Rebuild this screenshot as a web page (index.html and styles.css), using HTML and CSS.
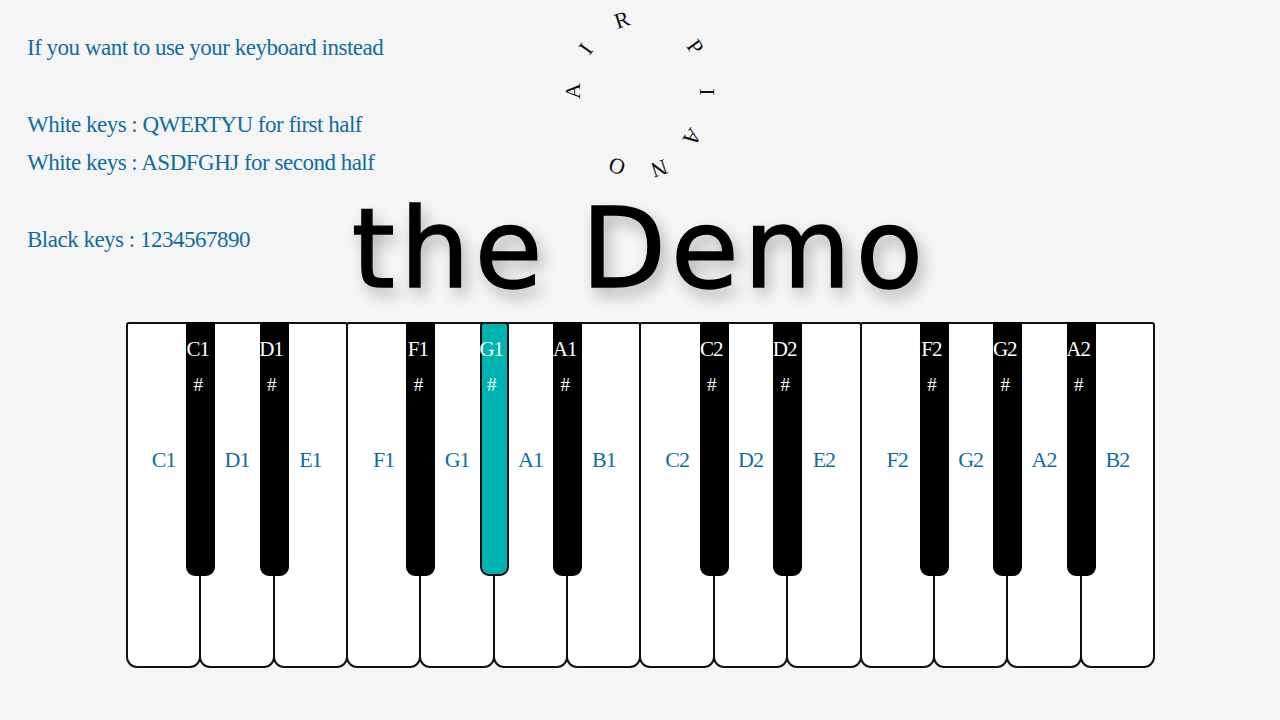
FILE: index.html
```html
<!DOCTYPE html>
<html lang="en">
<head>
    <meta charset="UTF-8">
    <meta name="viewport" content="width=device-width, initial-scale=1.0">
    <title>Air Piano</title>
    <link rel="stylesheet" href="styles.css">
</head>
<body>
    <div class="top">
        <div class="notes">
            <p>If you want to use your keyboard instead</p>
            <br>
            <p>White keys : QWERTYU for first half</p>
            <p>White keys : ASDFGHJ for second half</p>
            <br>
            <p>Black keys : 1234567890</p>
        </div>
        <div class="circle">
            <span>A</span><span>I</span><span>R</span><span>P</span><span>I</span><span>A</span><span>N</span><span>O</span>
        </div>
        <h1>the Demo</h1>
    </div>

    <div class="piano">
        <div class="key">C1<div class="black"><b>C1</b><i>#</i></div></div>
        <div class="key">D1<div class="black"><b>D1</b><i>#</i></div></div>
        <div class="key">E1</div>
        <div class="key">F1<div class="black"><b>F1</b><i>#</i></div></div>
        <div class="key">G1<div class="black active"><b>G1</b><i>#</i></div></div>
        <div class="key">A1<div class="black"><b>A1</b><i>#</i></div></div>
        <div class="key">B1</div>
        <div class="key">C2<div class="black"><b>C2</b><i>#</i></div></div>
        <div class="key">D2<div class="black"><b>D2</b><i>#</i></div></div>
        <div class="key">E2</div>
        <div class="key">F2<div class="black"><b>F2</b><i>#</i></div></div>
        <div class="key">G2<div class="black"><b>G2</b><i>#</i></div></div>
        <div class="key">A2<div class="black"><b>A2</b><i>#</i></div></div>
        <div class="key">B2</div>
    </div>
</body>
</html>
```

FILE: styles.css
```css
body {
    margin: 0;
    background: #f5f5f5;
    font-family: "Liberation Serif", serif;
    color: #0f6d9e;
}
.top {
    height: 322px;
    display: grid;
    position: relative;
}
.notes {
    grid-area: 1 / 1;
    padding: 29px 0 0 27px;
    font-size: 23px;
    line-height: 38.4px;
    letter-spacing: -0.5px;
}
.notes p {
    margin: 0;
}
h1 {
    grid-area: 1 / 1;
    align-self: end;
    justify-self: center;
    margin: 0 0 -23px 0;
    font-family: "DejaVu Sans", sans-serif;
    font-weight: normal;
    font-size: 110px;
    line-height: 130px;
    letter-spacing: 5px;
    word-spacing: -6px;
    color: #000;
    -webkit-text-stroke: 1.5px #000;
    text-shadow: 5px 8px 15px rgba(0, 0, 0, 0.3);
}
.circle {
    color: #111;
    font-size: 22px;
    line-height: 1;
}
.circle span {
    position: absolute;
}
.circle span:nth-child(1) { left: 573px; top: 91px; transform: translate(-50%, -50%) rotate(-90deg); }
.circle span:nth-child(2) { left: 586px; top: 49px; transform: translate(-50%, -50%) rotate(-54deg); }
.circle span:nth-child(3) { left: 622px; top: 20px; transform: translate(-50%, -50%) rotate(-18deg); }
.circle span:nth-child(4) { left: 695px; top: 47px; transform: translate(-50%, -50%) rotate(54deg); }
.circle span:nth-child(5) { left: 707px; top: 92px; transform: translate(-50%, -50%) rotate(90deg); }
.circle span:nth-child(6) { left: 692px; top: 137px; transform: translate(-50%, -50%) rotate(126deg); }
.circle span:nth-child(7) { left: 659px; top: 168px; transform: translate(-50%, -50%) rotate(162deg); }
.circle span:nth-child(8) { left: 617px; top: 166px; transform: translate(-50%, -50%) rotate(198deg); }
.piano {
    width: 1027px;
    height: 346px;
    margin: 0 0 0 126px;
    display: grid;
    grid-template-columns: repeat(14, 1fr);
}
.key {
    position: relative;
    width: calc(100% + 2px);
    box-sizing: border-box;
    padding-top: 122px;
    background: #fff;
    border: 2px solid #111;
    border-radius: 3px 3px 11px 11px;
    text-align: center;
    font-size: 22px;
    line-height: 28px;
    letter-spacing: -1px;
}
.black {
    position: absolute;
    z-index: 1;
    left: calc(100% - 13px);
    top: -2px;
    width: 29px;
    height: 254px;
    box-sizing: border-box;
    padding-top: 11px;
    background: #000;
    border: 2px solid #000;
    border-radius: 0 0 9px 9px;
    color: #fff;
    font-size: 21px;
}
.black b, .black i {
    display: block;
    font-weight: normal;
    font-style: normal;
    margin-left: -9px;
    margin-right: -3px;
}
.black i {
    margin-top: 8px;
    font-size: 19px;
}
.black.active {
    background: #00b3b3;
    border-color: #111;
    border-radius: 4px 4px 9px 9px;
}
```
